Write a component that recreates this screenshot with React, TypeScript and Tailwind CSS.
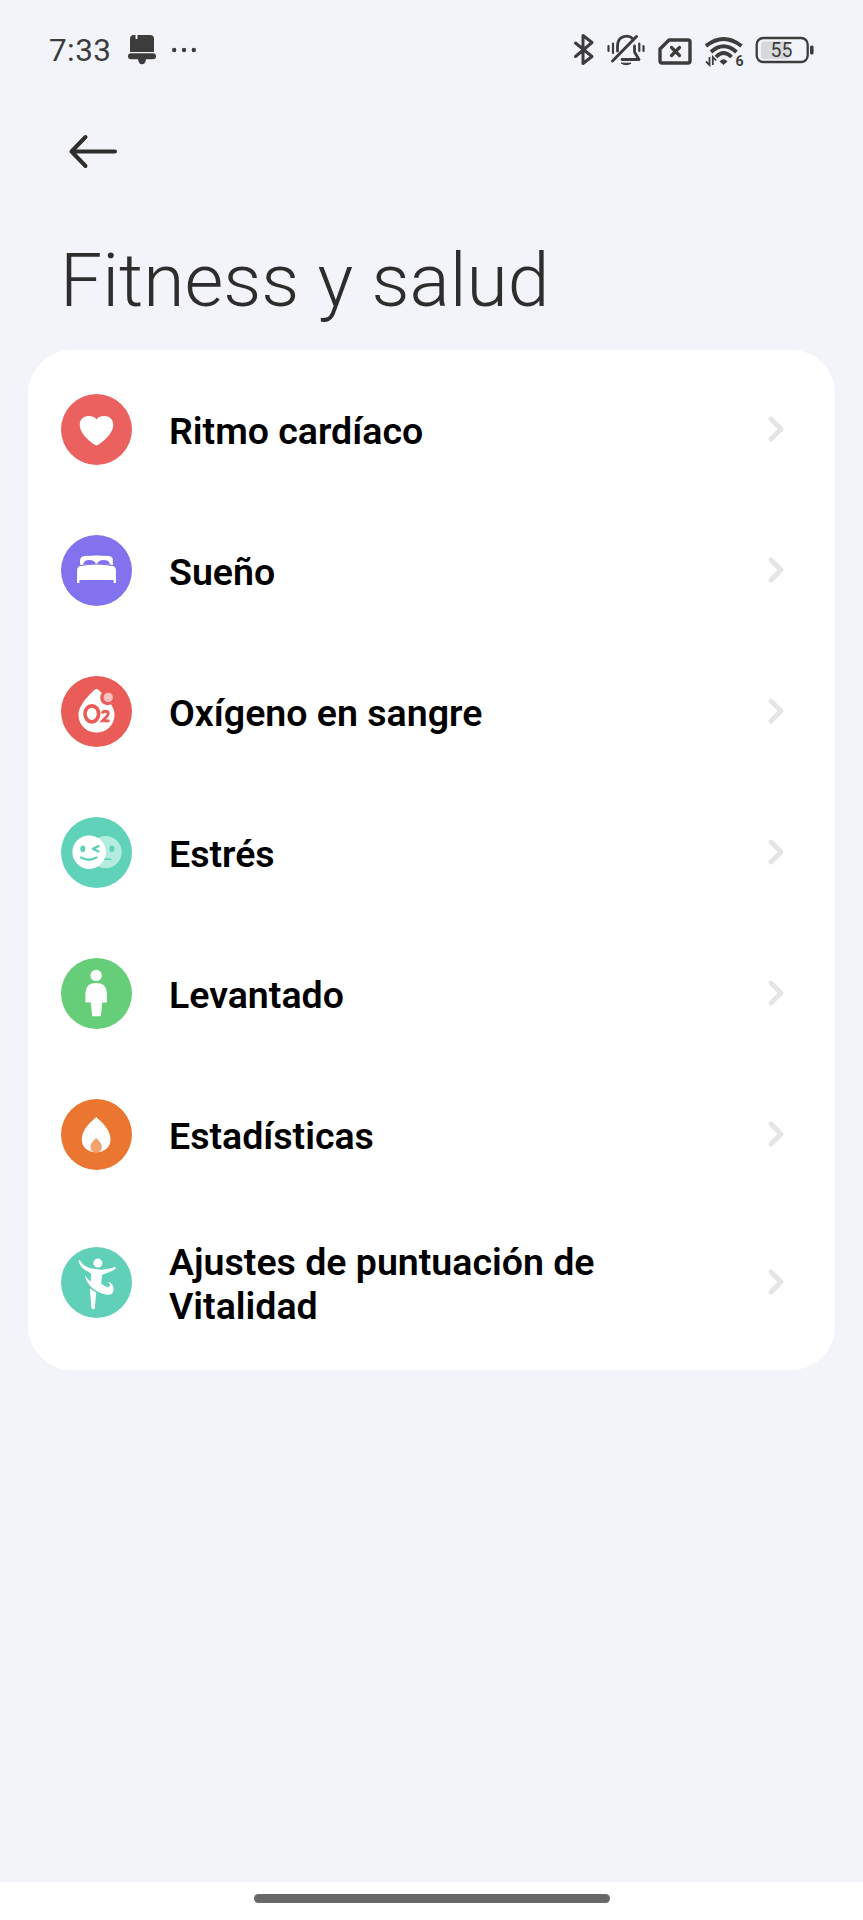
import React from 'react';

interface MenuItem {
  label: string;
  icon: React.ReactNode;
}

const HeartIcon = () => (
  <svg viewBox="0 0 212 212" className="h-full w-full">
    <circle cx="106" cy="106" r="106" fill="#ea615f" />
    <path
      d="M106 154C101 153 56 124 56 92C56 76 68 66 83 66C92 66 101 69 106 76C111 69 120 66 129 66C144 66 156 76 156 92C156 124 111 153 106 154Z"
      fill="#fff"
    />
  </svg>
);

const BedIcon = () => (
  <svg viewBox="0 0 212 212" className="h-full w-full">
    <circle cx="106" cy="106" r="106" fill="#8272ee" />
    {/* Headboard with the two pillows cut out */}
    <path d="M57 90V75Q58 65 70 63Q106 59 143 63Q155 65 155 75V90Z" fill="#fff" />
    <path d="M66 88Q69 75 84 75Q101 75 104 87ZM108 87Q111 75 128 75Q143 75 147 88Z" fill="#8272ee" />
    <path
      d="M48 143V105Q48 94 60 92Q106 84 152 92Q164 94 164 105V143H157V134H55V143Z"
      fill="#fff"
    />
    <path d="M56 91Q106 82 156 91" fill="none" stroke="#8272ee" strokeWidth="3" />
  </svg>
);

const OxygenIcon = () => (
  <svg viewBox="0 0 212 212" className="h-full w-full">
    <circle cx="106" cy="106" r="106" fill="#e95c58" />
    <path
      d="M100 41Q106 36 112 41C128 57 160 86 160 116A54 53 0 0 1 52 116C52 86 84 57 100 41Z"
      fill="#fff"
    />
    <circle cx="139" cy="65" r="22" fill="#e95c58" />
    <circle cx="141" cy="64" r="14" fill="#f9c0c0" />
    <ellipse cx="92" cy="113" rx="20.5" ry="24" fill="none" stroke="#e95c58" strokeWidth="11" />
    <path
      d="M123 112C125 103 141 103 141 112C141 119 130 127 124 134H145"
      fill="none"
      stroke="#e95c58"
      strokeWidth="8.5"
    />
  </svg>
);

const StressIcon = () => (
  <svg viewBox="0 0 212 212" className="h-full w-full">
    <circle cx="106" cy="106" r="106" fill="#61d2ba" />
    <circle cx="133" cy="105" r="48" fill="#b5ece0" />
    <ellipse cx="152" cy="95" rx="7.5" ry="10" fill="#61d2ba" />
    <path d="M128 126H148" stroke="#61d2ba" strokeWidth="5" strokeLinecap="round" />
    <circle cx="84" cy="105" r="50" fill="#fff" />
    <ellipse cx="65" cy="95" rx="7.5" ry="10" fill="#61d2ba" />
    <path
      d="M112 87L95 95L112 103M60 121Q83 134 106 121"
      fill="none"
      stroke="#61d2ba"
      strokeWidth="7"
      strokeLinecap="round"
      strokeLinejoin="round"
    />
  </svg>
);

const StandIcon = () => (
  <svg viewBox="0 0 212 212" className="h-full w-full">
    <circle cx="106" cy="106" r="106" fill="#66cd78" />
    <circle cx="105" cy="52" r="17" fill="#fff" />
    <path d="M73 133V103Q75 75 105 75Q135 75 137 103V133H123L119 174H93L89 133Z" fill="#fff" />
  </svg>
);

const FlameIcon = () => (
  <svg viewBox="0 0 212 212" className="h-full w-full">
    <circle cx="106" cy="106" r="106" fill="#ea7631" />
    <path
      d="M105 54C117 66 148 90 148 120C148 142 132 159 105 159C78 159 62 142 62 120C62 90 93 66 105 54Z"
      fill="#fff"
    />
    <path
      d="M105 116C110 123 122 131 122 143C122 154 115 159 105 159C95 159 88 154 88 143C88 131 100 123 105 116Z"
      fill="#f0a371"
    />
  </svg>
);

const VitalityIcon = () => (
  <svg viewBox="0 0 212 212" className="h-full w-full">
    <circle cx="106" cy="106" r="106" fill="#61d0b8" />
    <circle cx="110" cy="48" r="13.5" fill="#fff" />
    <path
      d="M52 40Q56 38 59 43C68 58 84 63 104 66C126 70 144 66 160 60Q166 61 162 66C148 75 134 78 123 83L120 108C129 116 138 121 145 118C149 114 145 107 139 104C153 104 161 123 155 136C148 147 128 143 108 132C90 122 76 106 71 84C77 93 82 97 89 103L90 79C72 70 57 60 52 40Z"
      fill="#fff"
    />
    <path d="M86 124L105 136L101 184Q96 188 91 183Z" fill="#fff" />
  </svg>
);

const menuItems: MenuItem[] = [
  { label: 'Ritmo cardíaco', icon: <HeartIcon /> },
  { label: 'Sueño', icon: <BedIcon /> },
  { label: 'Oxígeno en sangre', icon: <OxygenIcon /> },
  { label: 'Estrés', icon: <StressIcon /> },
  { label: 'Levantado', icon: <StandIcon /> },
  { label: 'Estadísticas', icon: <FlameIcon /> },
  { label: 'Ajustes de puntuación de Vitalidad', icon: <VitalityIcon /> },
];

const StatusBar = () => (
  <div className="flex h-[100px] items-center justify-between pr-[48px] pl-[49px] text-[#3c3c3c]">
    <div className="flex items-center">
      <span className="w-[79px] pt-px text-[31.5px] leading-none tracking-[0.4px]">7:33</span>
      {/* Notification bell */}
      <svg viewBox="0 0 28 30" className="h-[30px] w-[28px]" fill="currentColor">
        <path d="M6 0H7.5V3.5Q8.5 4.5 9.5 3.5V0H22Q26 0 26 4V17H2V4Q2 0 6 0Z" />
        <rect x="0" y="18.3" width="28" height="6" rx="3" />
        <path d="M10 24H18Q17.5 29.3 14 29.3Q10.5 29.3 10 24Z" />
      </svg>
      <svg viewBox="0 0 24 6" className="ml-[16px] h-[6px] w-[24px]" fill="currentColor">
        <circle cx="2.2" cy="3" r="2.2" />
        <circle cx="12" cy="3" r="2.2" />
        <circle cx="21.8" cy="3" r="2.2" />
      </svg>
    </div>

    <div className="flex items-center">
      {/* Bluetooth */}
      <svg
        viewBox="0 0 22 34"
        className="h-[34px] w-[22px]"
        fill="none"
        stroke="currentColor"
        strokeWidth="3"
        strokeLinejoin="round"
        strokeLinecap="round"
      >
        <path d="M2.5 10L19 23.5L10 30.5V2.5L19 9.5L2.5 23.5" />
      </svg>
      {/* Muted, vibrating */}
      <svg
        viewBox="0 0 38 34"
        className="ml-[12px] h-[34px] w-[38px]"
        fill="none"
        stroke="currentColor"
        strokeWidth="2.8"
        strokeLinecap="round"
        strokeLinejoin="round"
      >
        <path d="M10.5 18V13C10.5 2 22 1.5 25.5 5.5M27.5 13V19L32 26.5H15" />
        <path d="M5.5 28L29.5 3.5" strokeWidth="3" />
        <path d="M1.5 13V18M6 10.5V20M32.3 10.5V18M36.500 13V18" strokeWidth="2.2" />
        <path d="M14.5 30.2H24Q19 33.5 14.5 30.2Z" fill="currentColor" strokeWidth="1" />
      </svg>
      {/* No SIM */}
      <svg
        viewBox="0 0 34 34"
        className="ml-[13px] h-[34px] w-[34px]"
        fill="none"
        stroke="currentColor"
        strokeWidth="3.4"
        strokeLinejoin="round"
        strokeLinecap="round"
      >
        <path d="M11 7H30Q32 7 32 9V28Q32 30 30 30H4Q2 30 2 28V16Z" />
        <path d="M13.5 14.5L21.5 22.5M21.5 14.5L13.5 22.5" strokeWidth="3.2" />
      </svg>
      {/* Wi-Fi 6 */}
      <svg viewBox="0 0 40 34" className="ml-[12px] h-[34px] w-[40px]" fill="none" stroke="currentColor">
        <path d="M2 13Q19.5 -1 37.5 13" strokeWidth="3.8" />
        <path d="M7 19Q19.5 7.5 32.5 19" strokeWidth="3.8" />
        <path d="M12 24Q19.5 16 27.5 24" strokeWidth="3.8" />
        <path d="M15.5 28.5Q19.5 24 23.5 28.5L19.5 32Z" fill="currentColor" stroke="none" />
        <path d="M5.5 24V32L2 28.5M8.8 32V24L12 27.5" strokeWidth="1.8" />
        <text x="31.5" y="32.5" fontSize="14" fontWeight="700" fill="currentColor" stroke="none">
          6
        </text>
      </svg>
      {/* Battery */}
      <svg viewBox="0 0 60 34" className="ml-[11px] h-[34px] w-[60px]">
        <rect x="6" y="8.500" width="28" height="17.500" rx="3" fill="#d7d8dc" />
        <rect x="1.7" y="5" width="51" height="24" rx="6.5" fill="none" stroke="currentColor" strokeWidth="2.3" />
        <rect x="55" y="12.5" width="3.6" height="9" rx="1.6" fill="currentColor" />
        <text x="26.5" y="24" fontSize="19.5" textAnchor="middle" fill="currentColor">
          55
        </text>
      </svg>
    </div>
  </div>
);

const MenuRow: React.FC<MenuItem> = ({ label, icon }) => (
  <li className="flex h-[141px] items-center pr-[51px] pl-[33px] last:h-[155px]">
    <div className="h-[71px] w-[71px] shrink-0">{icon}</div>
    <span className="ml-[37px] w-[460px] pt-1 text-[37.5px] leading-[44px] font-semibold text-black">{label}</span>
    <svg
      viewBox="0 0 16 26"
      className="ml-auto h-[26px] w-[16px]"
      fill="none"
      stroke="#e5e5e5"
      strokeWidth="4.8"
      strokeLinecap="round"
      strokeLinejoin="round"
    >
      <path d="M3 3L13 13L3 23" />
    </svg>
  </li>
);

export default function App() {
  return (
    <div className="flex h-[1920px] w-[863px] flex-col bg-[#f2f4f9] font-[Roboto,sans-serif]">
      <StatusBar />

      <header className="pl-[60px]">
        <button className="mt-[33px] ml-2 block" aria-label="Atrás">
          <svg
            viewBox="0 0 50 36"
            className="h-[36px] w-[50px]"
            fill="none"
            stroke="#2d2d2d"
            strokeWidth="4"
            strokeLinecap="round"
            strokeLinejoin="round"
          >
            <path d="M17.5 4L3.5 18.5L17.5 33M3.5 18.5H47" />
          </svg>
        </button>
        <h1 className="mt-[67px] text-[75px] leading-[88px] font-light text-[#2d2d2d]">Fitness y salud</h1>
      </header>

      <ul className="mx-[28px] mt-[25.5px] rounded-[44px] bg-white pt-[9px] pb-[10.5px]">
        {menuItems.map((item) => (
          <MenuRow key={item.label} label={item.label} icon={item.icon} />
        ))}
      </ul>

      <footer className="mt-auto flex h-[38px] justify-center bg-white pt-[12px]">
        <div className="h-[9px] w-[356px] rounded-full bg-[#686868]" />
      </footer>
    </div>
  );
}
